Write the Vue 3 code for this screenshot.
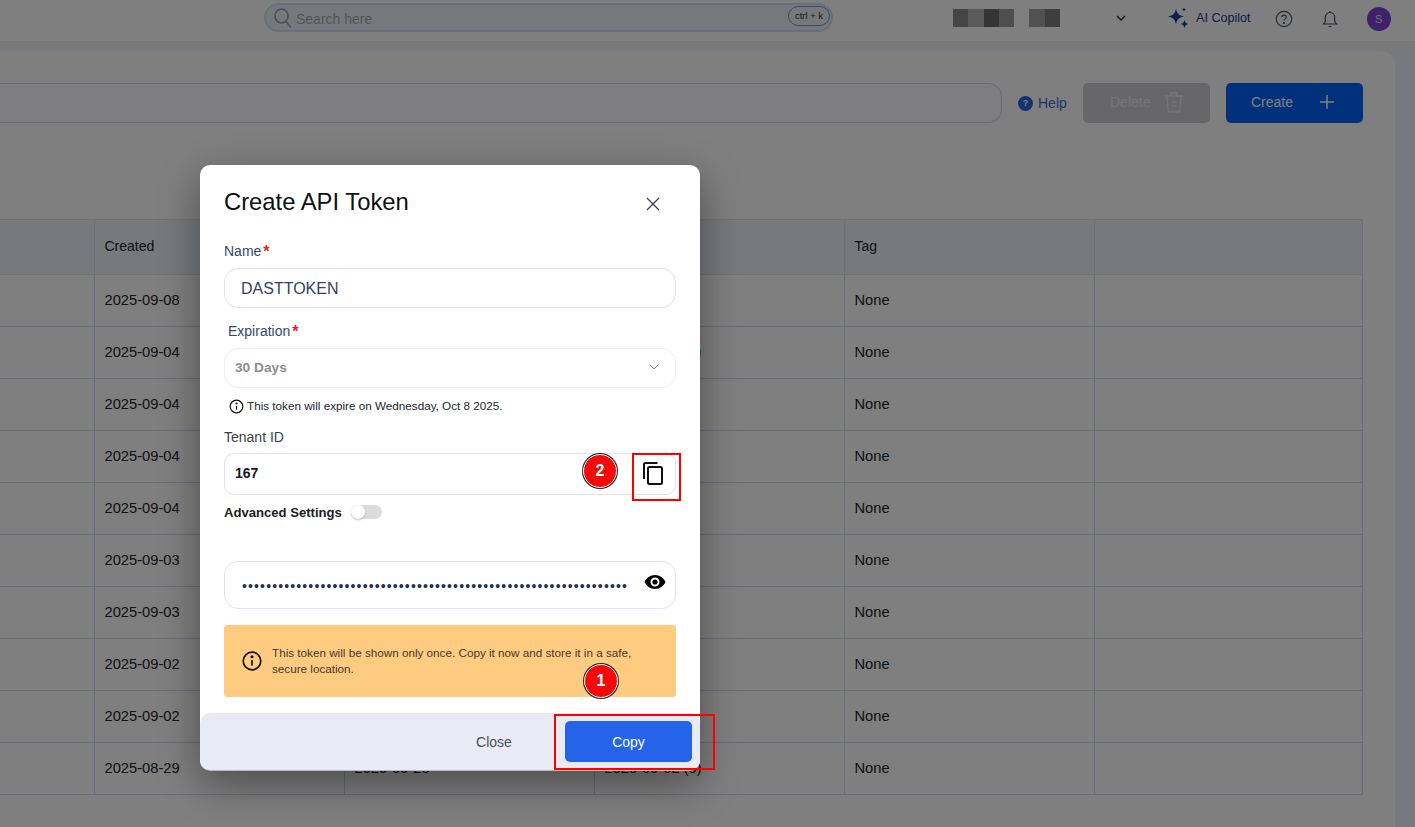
<script setup>
const rows = [
  ['2025-09-08', '2025-10-08', '2025-09-08', ''],
  ['2025-09-04', '2025-10-04', '2025-09-04', '(2)'],
  ['2025-09-04', '2025-10-04', '2025-09-04', ''],
  ['2025-09-04', '2025-10-04', '2025-09-04', ''],
  ['2025-09-04', '2025-10-04', '2025-09-04', ''],
  ['2025-09-03', '2025-10-03', '2025-09-03', ''],
  ['2025-09-03', '2025-10-03', '2025-09-03', ''],
  ['2025-09-02', '2025-10-02', '2025-09-02', ''],
  ['2025-09-02', '2025-10-02', '2025-09-02', ''],
  ['2025-08-29', '2025-09-28', '2025-09-02', '(5)']
]
const dots = '•'.repeat(64)
const blocks = [
  ['#8a8a8a', 15], ['#b4b4b4', 16], ['#686868', 15], ['#9c9c9c', 15], ['#a2a2a2', 16], ['#7c7c7c', 15]
]
</script>

<template>
  <div class="page">
    <header class="topbar">
      <div class="search">
        <svg class="search-icon" width="20" height="22" viewBox="0 0 20 22" fill="none" stroke="#8aa0bd" stroke-width="1.5">
          <ellipse cx="8.5" cy="9" rx="6.5" ry="7" />
          <path d="M13 14.5l4.5 5.5" stroke-linecap="round" />
        </svg>
        <span class="search-text">Search here</span>
        <span class="kbd">ctrl + k</span>
      </div>
      <div class="blocks">
        <i v-for="(b, i) in blocks" :key="i" :style="{ background: b[0], width: b[1] + 'px' }"></i>
      </div>
      <svg class="chev" width="12" height="8" viewBox="0 0 12 8" fill="none" stroke="#222" stroke-width="1.3"><path d="M2 2l4 4 4-4" /></svg>
      <div class="copilot">
        <svg width="22" height="22" viewBox="0 0 22 22" fill="#1c3fa8">
          <path d="M9 1.500c1 5 2.500 6.800 8 8-5.500 1.200-7 3-8 8-1-5-2.500-6.800-8-8 5.500-1.200 7-3 8-8z" />
          <path d="M17 .3c.3 1.400.8 1.900 2.200 2.200-1.400.3-1.900.8-2.200 2.200-.3-1.400-.8-1.900-2.200-2.200 1.400-.3 1.900-.8 2.200-2.200z" />
          <path d="M17.500 13c.5 2.500 1.500 3.500 4 4-2.500.5-3.500 1.500-4 4-.5-2.500-1.500-3.500-4-4 2.500-.5 3.500-1.500 4-4z" />
        </svg>
        <span>AI Copilot</span>
      </div>
      <svg class="help-ic" width="18" height="18" viewBox="0 0 18 18" fill="none" stroke="#4a5568" stroke-width="1.2">
        <circle cx="9" cy="9" r="7.700" />
        <path d="M6.800 7.200c0-1.300 1-2.100 2.200-2.100s2.200.8 2.200 2c0 1.800-2.200 1.700-2.200 3.400" />
        <circle cx="9" cy="13" r=".5" fill="#4a5568" />
      </svg>
      <svg class="bell" width="16" height="18" viewBox="0 0 16 18" fill="none" stroke="#4a5568" stroke-width="1.200">
        <path d="M1.500 14h13l-1.800-2.500V7.500C12.700 4.600 10.700 2.500 8 2.500S3.300 4.600 3.300 7.500v4z" />
        <path d="M6.500 16.500h3M8 1v1.500" />
      </svg>
      <span class="avatar">S</span>
    </header>

    <main class="main">
      <section class="card">
        <div class="toolbar">
          <div class="filter"></div>
          <a class="help"><span class="help-dot">?</span>Help</a>
          <button class="btn delete">
            Delete
            <svg width="20" height="22" viewBox="0 0 20 22" fill="none" stroke="#fff" stroke-opacity=".55" stroke-width="1.300">
              <path d="M1 5h18M7 5V2h6v3M3 5l1.200 14.500a1.500 1.500 0 0 0 1.500 1.500h8.600a1.500 1.500 0 0 0 1.500-1.500L17 5M7.500 11h5M7.500 15h5" />
            </svg>
          </button>
          <button class="btn create">
            Create
            <svg width="16" height="16" viewBox="0 0 16 16" fill="none" stroke="#fff" stroke-width="1.500"><path d="M8 1v14M1 8h14" /></svg>
          </button>
        </div>
        <table class="table">
          <thead>
            <tr>
              <th></th>
              <th>Created</th>
              <th></th>
              <th></th>
              <th>Tag</th>
              <th></th>
            </tr>
          </thead>
          <tbody>
            <tr v-for="(r, i) in rows" :key="i">
              <td></td>
              <td>{{ r[0] }}</td>
              <td>{{ r[1] }}</td>
              <td>{{ r[2] }} <span :class="{ count: i === 1 }">{{ r[3] }}</span></td>
              <td>None</td>
              <td></td>
            </tr>
          </tbody>
        </table>
      </section>
    </main>

    <div class="overlay"></div>

    <div class="modal">
      <div class="modal-body">
        <div class="modal-head">
          <h2>Create API Token</h2>
          <svg width="16" height="16" viewBox="0 0 16 16" fill="none" stroke="#33405f" stroke-width="1.300"><path d="M2 2l12 12M14 2L2 14" /></svg>
        </div>
        <label class="label name-label">Name<b>*</b></label>
        <div class="field name">DASTTOKEN</div>
        <label class="label exp-label">Expiration<b>*</b></label>
        <div class="field select">
          <span>30 Days</span>
          <svg width="12" height="8" viewBox="0 0 12 8" fill="none" stroke="#8a8f9c" stroke-width="1"><path d="M1.500 1.500L6 6l4.500-4.500" /></svg>
        </div>
        <p class="hint">
          <svg width="15" height="15" viewBox="0 0 15 15" fill="none" stroke="#111" stroke-width="1.200">
            <circle cx="7.500" cy="7.500" r="6.300" />
            <path d="M7.500 6.800v4" />
            <circle cx="7.500" cy="4.500" r=".5" fill="#111" />
          </svg>
          <span>This token will expire on Wednesday, Oct 8 2025.</span>
        </p>
        <label class="label tenant-label">Tenant ID</label>
        <div class="field tenant">
          <span>167</span>
          <svg width="22" height="24" viewBox="0 0 22 24" fill="none" stroke="#111" stroke-width="2">
            <path d="M15.500 2H3.500A1.500 1.500 0 0 0 2 3.500V18" />
            <rect x="6" y="6" width="14" height="17" rx="1.500" />
          </svg>
        </div>
        <div class="advanced">
          <span>Advanced Settings</span>
          <span class="switch"><i></i></span>
        </div>
        <div class="field secret">
          <span class="dots">{{ dots }}</span>
          <svg width="22" height="16" viewBox="0 0 22 16" fill="#000">
            <path fill-rule="evenodd" d="M11 1C6.200 1 2.400 3.900.5 8c1.900 4.100 5.700 7 10.500 7s8.600-2.900 10.500-7C19.600 3.900 15.800 1 11 1zm0 11.500A4.500 4.500 0 1 1 11 3.500a4.500 4.500 0 0 1 0 9z" />
            <circle cx="11" cy="8" r="2.600" />
          </svg>
        </div>
        <div class="warning">
          <svg width="20" height="20" viewBox="0 0 20 20" fill="none" stroke="#111" stroke-width="1.700">
            <circle cx="10" cy="10" r="8.800" />
            <path d="M10 9v5.500" />
            <circle cx="10" cy="5.800" r=".7" fill="#111" />
          </svg>
          <p>This token will be shown only once. Copy it now and store it in a safe, secure location.</p>
        </div>
      </div>
      <footer class="modal-foot">
        <button class="close">Close</button>
        <button class="copy">Copy</button>
      </footer>
    </div>

    <span class="mark mark-copy"></span>
    <span class="mark mark-tenant"></span>
    <span class="badge badge-1">1</span>
    <span class="badge badge-2">2</span>
  </div>
</template>

<style>
html, body { margin: 0; overflow: hidden; }
</style>

<style scoped>
.page {
  position: relative;
  width: 1415px;
  height: 827px;
  overflow: hidden;
  background: #f0f2fa;
  font-family: "Liberation Sans", Arial, sans-serif;
  color: #1b2233;
}
.topbar {
  height: 42px;
  box-sizing: border-box;
  border-bottom: 1px solid #e6e8ee;
  background: #fff;
  display: flex;
  align-items: center;
  padding-left: 264px;
}
.search {
  width: 569px;
  height: 29px;
  margin-top: -6px;
  box-sizing: border-box;
  border: 2px solid #d4e0f4;
  border-radius: 15px;
  background: #eef1fb;
  display: flex;
  align-items: center;
  padding: 0 1px 0 7px;
}
.search-icon { flex: none; margin-right: 3px; }
.search-text { font-size: 14px; color: #a4a9b6; flex: 1; padding-top: 2px; }
.kbd {
  width: 40px;
  height: 18px;
  border: 1px solid #8a92a2;
  border-radius: 10px;
  font-size: 9.500px;
  line-height: 18px;
  text-align: center;
  color: #333;
  margin-top: -3px;
}
.blocks { display: flex; margin-left: 120px; height: 18px; margin-top: -6px; }
.blocks i { display: block; }
.blocks i:nth-child(4) { margin-right: 15px; }
.chev { margin-left: 55px; margin-top: -5px; }
.copilot {
  display: flex;
  align-items: center;
  gap: 7px;
  margin-left: 40px;
  margin-top: -5px;
  font-size: 12.600px;
  color: #17369c;
}
.help-ic { margin-left: 24px; margin-top: -4px; }
.bell { margin-left: 29px; margin-top: -4px; }
.avatar {
  width: 24px;
  height: 24px;
  border-radius: 50%;
  background: #7b45d6;
  color: #e8e0f6;
  font-size: 11px;
  text-align: center;
  line-height: 24px;
  margin-left: 29px;
  margin-top: -4px;
}
.main { padding: 9px 20px 0 0; }
.card {
  height: 776px;
  box-sizing: border-box;
  background: #fff;
  border-radius: 0 14px 0 0;
  padding: 32px 32px 0 0;
}
.toolbar { display: flex; align-items: center; height: 40px; }
.filter {
  width: 1002px;
  height: 40px;
  box-sizing: border-box;
  border: 1px solid #d2d8e8;
  border-left: 0;
  border-radius: 0 14px 14px 0;
  background: #fafbff;
}
.help {
  display: flex;
  align-items: center;
  gap: 5px;
  margin-left: 16px;
  width: 65px;
  font-size: 14px;
  color: #3f66d6;
}
.help-dot {
  width: 15px;
  height: 15px;
  border-radius: 50%;
  background: #2a63e6;
  color: #fff;
  font-size: 9px;
  font-weight: 700;
  text-align: center;
  line-height: 15px;
}
.btn {
  height: 40px;
  border: 0;
  border-radius: 5px;
  color: #fff;
  font: 14px "Liberation Sans", Arial, sans-serif;
  display: flex;
  align-items: center;
  justify-content: space-between;
  padding-bottom: 2px !important;
}
.delete { width: 127px; margin-right: 16px; background: #cfcfd2; padding: 0 26px 0 27px; color: #e6e6e8; }
.create { width: 137px; background: #0563f7; padding: 0 28px 0 25px; }
.table {
  width: 1363px;
  margin-top: 96px;
  border-collapse: collapse;
  table-layout: fixed;
  font-size: 14.700px;
}
.table tr > :nth-child(1) { width: 94px; }
.table tr > :nth-child(2),
.table tr > :nth-child(3),
.table tr > :nth-child(4),
.table tr > :nth-child(5) { width: 250px; }
th, td {
  box-sizing: border-box;
  border: 1px solid #cfdcf4;
  padding: 0 0 0 10px;
  text-align: left;
  font-weight: 400;
  color: #20232b;
  white-space: nowrap;
}
th:first-child, td:first-child { border-left: 0; }
thead th { height: 55px; background: #f1f3fb; border-color: #dbe4f4; font-size: 14px; padding-bottom: 3px; }
tbody td { height: 52px; padding-bottom: 2px; }
.count { color: #1f9bb0; }

.overlay {
  position: absolute;
  inset: 0;
  background: rgba(0, 0, 0, 0.5);
}

.modal {
  position: absolute;
  left: 200px;
  top: 165px;
  width: 500px;
  height: 605px;
  background: #fff;
  border-radius: 10px;
  box-shadow: 0 1px 0 #b8b8bc, 0 14px 40px rgba(0, 0, 0, 0.4);
  display: flex;
  flex-direction: column;
  overflow: hidden;
}
.modal-body { flex: 1; padding: 0 24px; }
.modal-head {
  height: 77px;
  display: flex;
  justify-content: space-between;
  align-items: flex-start;
  padding-top: 22px;
  box-sizing: border-box;
}
.modal-head h2 {
  margin: 0;
  font-size: 23.800px;
  line-height: 30px;
  font-weight: 400;
  color: #0c0f14;
}
.modal-head svg { margin: 9px 15px 0 0; }
.label {
  display: block;
  font-size: 14px;
  line-height: 18px;
  color: #3a4566;
}
.label b {
  color: #e2232a;
  font-weight: 700;
  font-size: 16px;
  line-height: 10px;
  margin-left: 2px;
  position: relative;
  top: 1px;
}
.name-label { height: 26px; }
.field {
  box-sizing: border-box;
  border: 1px solid #dfe3f1;
  border-radius: 14px;
  background: #fff;
  display: flex;
  align-items: center;
}
.name {
  height: 40px;
  padding: 2px 0 0 16px;
  font-size: 16px;
  color: #333f66;
}
.exp-label { margin-top: 14px; padding-left: 4px; height: 26px; }
.select {
  height: 40px;
  justify-content: space-between;
  padding: 0 15px 2px 10px;
  border-color: #eceef6;
  font-size: 13.700px;
  font-weight: 700;
  color: #8d8d8d;
}
.hint {
  margin: 9px 0 0 5px;
  height: 18px;
  font-size: 11.700px;
  line-height: 18px;
  color: #20242e;
  display: flex;
  align-items: center;
  gap: 3px;
}
.tenant-label { margin-top: 13px; height: 25px; color: #3b3f4a; }
.tenant {
  height: 42px;
  justify-content: space-between;
  padding: 0 11px 2px 10px;
  font-size: 14px;
  font-weight: 700;
  color: #15181f;
  border-radius: 10px;
}
.advanced {
  display: flex;
  align-items: center;
  gap: 9px;
  margin-top: 8px;
  height: 18px;
  font-size: 13.100px;
  font-weight: 700;
  color: #1a1d24;
}
.switch {
  position: relative;
  width: 31px;
  height: 14px;
  border-radius: 7px;
  background: #dcdcdf;
  flex: none;
}
.switch i {
  position: absolute;
  left: 0;
  top: 0;
  width: 14px;
  height: 14px;
  border-radius: 50%;
  background: #fff;
  box-shadow: 0 1px 2px rgba(0, 0, 0, 0.25);
}
.secret {
  height: 48px;
  margin-top: 40px;
  justify-content: space-between;
  padding: 0 9px 6px 17px;
}
.dots {
  font-size: 14px;
  letter-spacing: 1.130px;
  color: #243055;
  margin-top: 8px;
}
.warning {
  margin-top: 16px;
  height: 72px;
  box-sizing: border-box;
  border-radius: 3px;
  background: #ffcb80;
  display: flex;
  align-items: center;
  gap: 10px;
  padding: 0 30px 0 18px;
}
.warning svg { flex: none; }
.warning p {
  margin: 0;
  font-size: 11.700px;
  line-height: 16px;
  color: #3d3a33;
}
.modal-foot {
  height: 57px;
  flex: none;
  background: #e8eaf6;
  border-radius: 10px;
  display: flex;
  align-items: center;
  justify-content: flex-end;
  padding: 0 8px 0 0;
}
.close {
  border: 0;
  background: none;
  width: 90px;
  margin-right: 26px;
  padding: 0;
  font: 14px "Liberation Sans", Arial, sans-serif;
  color: #4b4e57;
}
.copy {
  width: 127px;
  height: 41px;
  border: 0;
  border-radius: 5px;
  background: #2563eb;
  color: #fff;
  font: 14px "Liberation Sans", Arial, sans-serif;
}

.mark {
  position: absolute;
  box-sizing: border-box;
  border: 2px solid #f00;
}
.mark-copy { left: 554px; top: 714px; width: 161px; height: 56px; }
.mark-tenant { left: 632px; top: 453px; width: 49px; height: 48px; }
.badge {
  position: absolute;
  width: 34px;
  height: 34px;
  box-sizing: border-box;
  border-radius: 50%;
  background: #f50a0a;
  border: 1px solid #fff;
  box-shadow: 0 0 0 1px #222;
  color: #fff;
  font-size: 16px;
  font-weight: 700;
  text-align: center;
  line-height: 32px;
}
.badge-1 { left: 584px; top: 664px; }
.badge-2 { left: 583px; top: 454px; }
</style>
